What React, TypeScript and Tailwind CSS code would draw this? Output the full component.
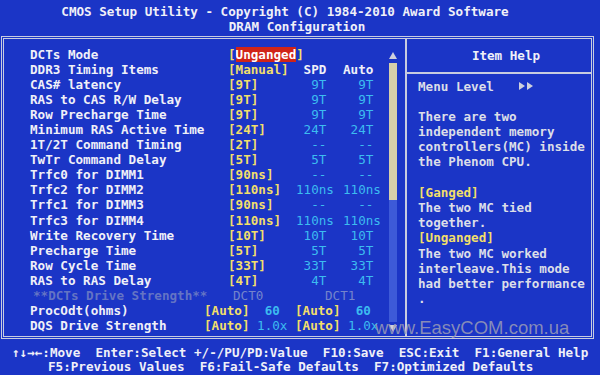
import React from 'react'

type Timing = [string, string, string, string]

const timings: Timing[] = [
  ['CAS# latency', '9T', '  9T', '  9T'],
  ['RAS to CAS R/W Delay', '9T', '  9T', '  9T'],
  ['Row Precharge Time', '9T', '  9T', '  9T'],
  ['Minimum RAS Active Time', '24T', ' 24T', ' 24T'],
  ['1T/2T Command Timing', '2T', '  --', '  --'],
  ['TwTr Command Delay', '5T', '  5T', '  5T'],
  ['Trfc0 for DIMM1', '90ns', '  --', '  --'],
  ['Trfc2 for DIMM2', '110ns', '110ns', '110ns'],
  ['Trfc1 for DIMM3', '90ns', '  --', '  --'],
  ['Trfc3 for DIMM4', '110ns', '110ns', '110ns'],
  ['Write Recovery Time', '10T', ' 10T', ' 10T'],
  ['Precharge Time', '5T', '  5T', '  5T'],
  ['Row Cycle Time', '33T', ' 33T', ' 33T'],
  ['RAS to RAS Delay', '4T', '  4T', '  4T'],
]

const help = [
  { t: 'Menu Level', arrows: true },
  { t: '' },
  { t: 'There are two' },
  { t: 'independent memory' },
  { t: 'controllers(MC) inside' },
  { t: 'the Phenom CPU.' },
  { t: '' },
  { t: '[Ganged]', y: true },
  { t: 'The two MC tied' },
  { t: 'together.' },
  { t: '[Unganged]', y: true },
  { t: 'The two MC worked' },
  { t: 'interleave.This mode' },
  { t: 'had better performance' },
  { t: '.' },
]

function Row({ children }: { children: React.ReactNode }) {
  return (
    <div className="flex h-[15.1px] items-center leading-[15.1px] whitespace-pre">
      {children}
    </div>
  )
}

function Tri({ dir }: { dir: 'up' | 'down' | 'right' }) {
  const pts =
    dir === 'up' ? '0,7 4,0 8,7' : dir === 'down' ? '0,0 8,0 4,7' : '0,0 6,4 0,8'
  return (
    <svg width={dir === 'right' ? 6 : 8} height={dir === 'right' ? 8 : 7} viewBox={dir === 'right' ? '0 0 6 8' : '0 0 8 7'}>
      <polygon points={pts} fill="#cfd0dc" />
    </svg>
  )
}

export default function App() {
  return (
    <div className="relative w-[600px] h-[375px] overflow-hidden bg-[#1b35c6] font-['DejaVu_Sans_Mono',monospace] text-[12.6px] font-bold text-[#f0f0f8]">
      <header className="h-[36px] pt-[3.5px] text-center leading-[15px] whitespace-pre">
        <div className="pr-[30px]">CMOS Setup Utility - Copyright (C) 1984-2010 Award Software</div>
        <div className="pr-[6px]">DRAM Configuration</div>
      </header>

      <div className="ml-[1px] flex h-[303px] w-[593px] border-[3px] border-double border-[#c8cce0]">
        <div className="flex w-[401px]">
          <div className="flex-1 pl-[26px] pt-[7.5px]">
            <Row>
              <span className="w-[198px]">DCTs Mode</span>
              <span className="text-[#f2df6a]">
                [<span className="inline-block bg-[#d02418] text-white">Unganged</span>]
              </span>
            </Row>
            <Row>
              <span className="w-[198px]">DDR3 Timing Items</span>
              <span className="w-[68px] text-[#f2df6a]">[Manual]</span>
              <span className="w-[47px]"> SPD</span>
              <span>Auto</span>
            </Row>
            {timings.map(([label, value, spd, auto]) => (
              <Row key={label}>
                <span className="w-[198px]">{label}</span>
                <span className="w-[68px] text-[#f2df6a]">[{value}]</span>
                <span className="w-[47px] font-normal text-[#3cbcf0]">{spd}</span>
                <span className="font-normal text-[#3cbcf0]">{auto}</span>
              </Row>
            ))}
            <Row>
              <span className="w-[203px] pl-[3px] text-[#6474c4]">**DCTs Drive Strength**</span>
              <span className="w-[92px] font-normal text-[#7484cc]">DCT0</span>
              <span className="font-normal text-[#7484cc]">DCT1</span>
            </Row>
            <Row>
              <span className="w-[174px]">ProcOdt(ohms)</span>
              <span className="w-[91px]">
                <span className="text-[#f2df6a]">[Auto]</span>
                <span className="text-[#3cbcf0]">  60</span>
              </span>
              <span className="text-[#f2df6a]">[Auto]</span>
              <span className="text-[#3cbcf0]">  60</span>
            </Row>
            <Row>
              <span className="w-[174px]">DQS Drive Strength</span>
              <span className="w-[91px]">
                <span className="text-[#f2df6a]">[Auto]</span>
                <span className="font-normal text-[#3cbcf0]"> 1.0x</span>
              </span>
              <span className="text-[#f2df6a]">[Auto]</span>
              <span className="font-normal text-[#3cbcf0]"> 1.0x</span>
            </Row>
          </div>

          <div className="mr-[8px] flex w-[8px] flex-col items-center pt-[13px]">
            <Tri dir="up" />
            <div className="mt-[4px] h-[137px] w-[8px] bg-[#d6ceaa]" />
            <div className="h-[122px] w-[8px] bg-[#3d5ad8]" />
            <div className="mt-[3px]">
              <Tri dir="down" />
            </div>
          </div>
        </div>

        <div className="w-[2px] bg-[#c8cce0]" />

        <div className="flex flex-1 flex-col">
          <div className="flex h-[33px] items-center justify-center pl-[14px] pt-[2px]">Item Help</div>
          <div className="h-[2px] bg-[#c8cce0]" />
          <div className="pl-[11px] pt-[4.5px] text-[#dcdee8]">
            {help.map((h, i) => (
              <div key={i} className="flex h-[15.2px] items-center leading-[15.2px] whitespace-pre">
                <span className={h.y ? 'text-[#f2df6a]' : ''}>{h.t}</span>
                {h.arrows && (
                  <span className="ml-[25px] flex gap-[2px]">
                    <Tri dir="right" />
                    <Tri dir="right" />
                  </span>
                )}
              </div>
            ))}
          </div>
        </div>
      </div>

      <footer className="pt-[7px] leading-[14px] whitespace-pre">
        <div className="pl-[12px]">↑↓→←:Move  Enter:Select +/-/PU/PD:Value  F10:Save  ESC:Exit  F1:General Help</div>
        <div className="pl-[48px]">F5:Previous Values  F6:Fail-Safe Defaults  F7:Optimized Defaults</div>
      </footer>

      <div className="absolute left-[375px] top-[319px] font-['Liberation_Sans',Arial,sans-serif] text-[18.5px] font-normal leading-[18.5px] text-[#9a9cb6]/85">
        www.EasyCOM.com.ua
      </div>
    </div>
  )
}
